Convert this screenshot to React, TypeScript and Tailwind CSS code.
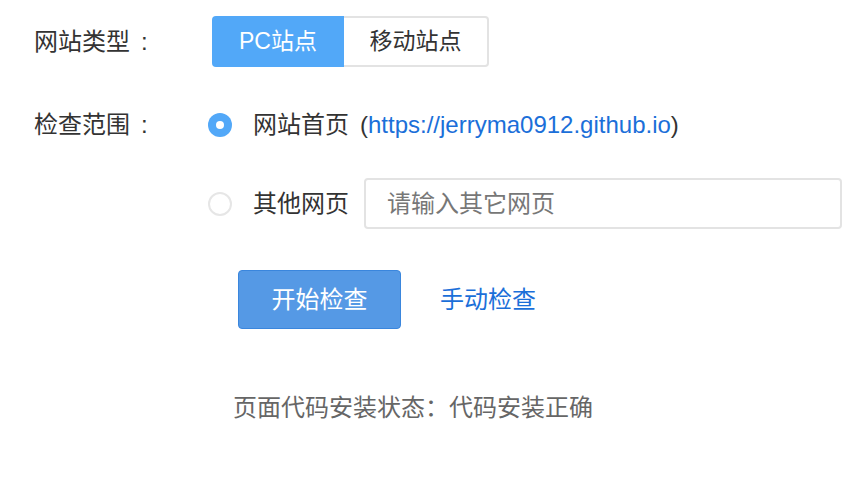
import React, { useState } from 'react';

const font = { fontFamily: '"Liberation Sans", "Noto Sans CJK SC", sans-serif' };

const App: React.FC = () => {
  const [site, setSite] = useState<'pc' | 'mobile'>('pc');
  const [scope, setScope] = useState<'home' | 'other'>('home');

  return (
    <div className="w-[852px] h-[480px] bg-white text-[#333] text-[24px] leading-none" style={font}>
      <div className="pt-[16px] pl-[34px]">
        {/* 网站类型 */}
        <div className="flex items-center h-[51px]">
          <div className="w-[178px]">
            网站类型<span className="ml-[11px]">:</span>
          </div>
          <div className="flex h-[51px] text-[23px]">
            <button
              onClick={() => setSite('pc')}
              className={`w-[132px] h-full rounded-l-[4px] ${site === 'pc' ? 'bg-[#52a8f8] text-white' : 'border-2 border-r-0 border-[#e3e3e3] text-[#333]'}`}
            >
              PC站点
            </button>
            <button
              onClick={() => setSite('mobile')}
              className={`w-[145px] h-full rounded-r-[4px] ${site === 'mobile' ? 'bg-[#52a8f8] text-white' : 'border-2 border-l-0 border-[#e3e3e3] text-[#333]'}`}
            >
              移动站点
            </button>
          </div>
        </div>

        {/* 检查范围 */}
        <div className="flex mt-[32px]">
          <div className="w-[174px] h-[51px] flex items-center">
            检查范围<span className="ml-[11px]">:</span>
          </div>
          <div className="flex flex-col gap-[28px]">
            <label className="flex items-center h-[51px] cursor-pointer" onClick={() => setScope('home')}>
              <Radio checked={scope === 'home'} />
              <span className="ml-[21px]">网站首页</span>
              <span className="ml-[11px]">
                (<span className="text-[#1b6fd9]">https://jerryma0912.github.io</span>)
              </span>
            </label>
            <div className="flex items-center h-[51px]">
              <label className="flex items-center cursor-pointer" onClick={() => setScope('other')}>
                <Radio checked={scope === 'other'} />
                <span className="ml-[21px]">其他网页</span>
              </label>
              <input
                placeholder="请输入其它网页"
                className="ml-[15px] w-[478px] h-[51px] border-2 border-[#e3e3e3] rounded-[4px] px-[21px] text-[24px] outline-none placeholder:text-[#777]"
                style={font}
              />
            </div>
          </div>
        </div>

        {/* actions */}
        <div className="flex items-center mt-[41px] ml-[204px]">
          <button className="w-[163px] h-[59px] bg-[#5599e5] border border-[#3a86dd] rounded-[4px] text-white">
            开始检查
          </button>
          <a className="ml-[39px] text-[#1b6fd9] cursor-pointer">手动检查</a>
        </div>

        <div className="mt-[67px] ml-[199px] text-[#666]">页面代码安装状态：代码安装正确</div>
      </div>
    </div>
  );
};

const Radio: React.FC<{ checked: boolean }> = ({ checked }) =>
  checked ? (
    <span className="w-[24px] h-[24px] rounded-full bg-[#52a8f8] flex items-center justify-center">
      <span className="w-[8px] h-[8px] rounded-full bg-white" />
    </span>
  ) : (
    <span className="w-[24px] h-[24px] rounded-full border-2 border-[#e6e6e6] bg-white" />
  );

export default App;
